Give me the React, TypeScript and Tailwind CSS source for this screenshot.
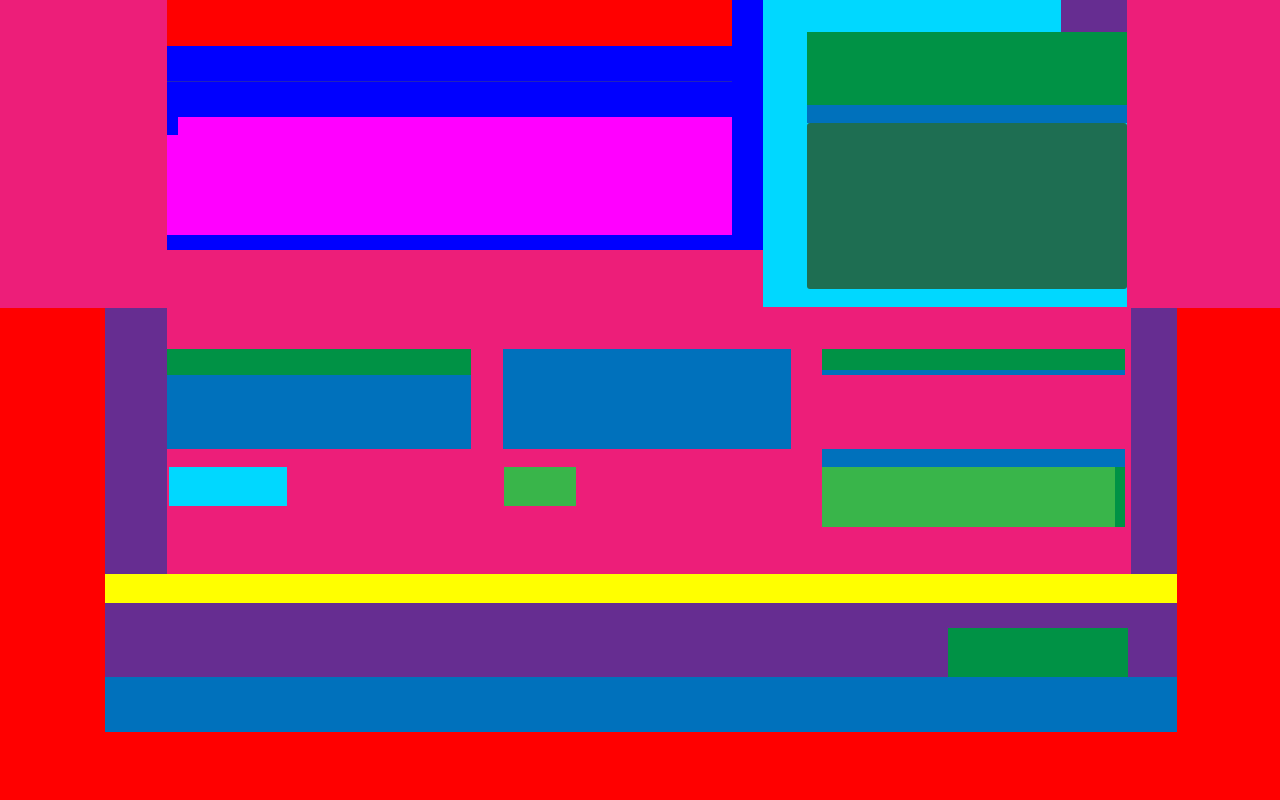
import React from 'react'

function TopLeft() {
  return (
    <div className="flex h-[250px] w-[596px] flex-col bg-[#0000ff]">
      <div className="h-[46px] w-[565px] bg-[#ff0000]" />
      <div className="h-[35px] w-[565px]" />
      <div className="h-px w-[565px] bg-[#2222bb]" />
      <div className="h-[35px] w-[565px]" />
      <div className="h-[118px] w-[565px] bg-[#ff00ff]">
        <div className="h-[18px] w-[11px] bg-[#0000ff]" />
      </div>
    </div>
  )
}

function TopRight() {
  return (
    <div className="flex h-[307px] w-[364px] flex-col bg-[#00d8ff]">
      <div className="flex h-[32px] justify-end">
        <div className="w-[66px] bg-[#662d91]" />
      </div>
      <div className="ml-[44px] flex w-[320px] flex-col">
        <div className="h-[73px] bg-[#009245]" />
        <div className="h-[18px] bg-[#0071bc]" />
        <div className="h-[166px] rounded-[3px] bg-[#1e6e52]" />
      </div>
    </div>
  )
}

function Cards() {
  return (
    <div className="flex h-[266px] w-[964px] bg-[#ed1e79] pt-[41px]">
      <div className="flex w-[304px] flex-col">
        <div className="h-[26px] bg-[#009245]" />
        <div className="h-[74px] bg-[#0071bc]" />
        <div className="ml-[2px] mt-[18px] h-[39px] w-[118px] bg-[#00d8ff]" />
      </div>
      <div className="ml-[32px] flex w-[288px] flex-col">
        <div className="h-[100px] bg-[#0071bc]" />
        <div className="ml-px mt-[18px] h-[39px] w-[72px] bg-[#39b54a]" />
      </div>
      <div className="ml-[31px] flex w-[303px] flex-col">
        <div className="h-[21px] bg-[#009245]" />
        <div className="h-[5px] bg-[#0071bc]" />
        <div className="h-[74px]" />
        <div className="h-[18px] bg-[#0071bc]" />
        <div className="flex h-[60px]">
          <div className="flex-1 bg-[#39b54a]" />
          <div className="w-[10px] bg-[#009245]" />
        </div>
      </div>
    </div>
  )
}

export default function App() {
  return (
    <div className="flex h-[800px] w-[1280px] flex-col overflow-hidden bg-[#ff0000]">
      <div className="flex h-[308px] shrink-0 bg-[#ed1e79]">
        <div className="w-[167px] shrink-0" />
        <TopLeft />
        <TopRight />
      </div>
      <div className="ml-[105px] flex w-[1072px] flex-col">
        <div className="flex">
          <div className="w-[62px] bg-[#662d91]" />
          <Cards />
          <div className="w-[46px] bg-[#662d91]" />
        </div>
        <div className="h-[29px] bg-[#ffff00]" />
        <div className="h-[74px] bg-[#662d91] pl-[843px] pt-[25px]">
          <div className="h-[49px] w-[180px] bg-[#009245]" />
        </div>
        <div className="h-[55px] bg-[#0071bc]" />
      </div>
    </div>
  )
}
